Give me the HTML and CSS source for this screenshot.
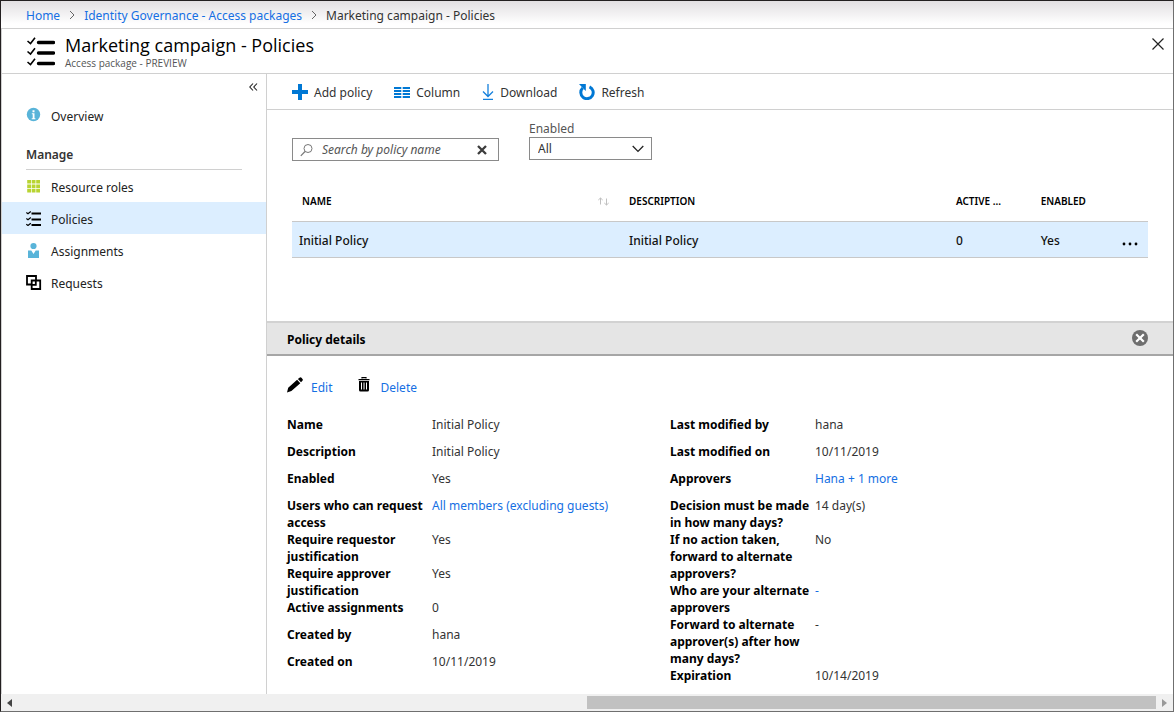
FILE: index.html
```html
<!DOCTYPE html>
<html lang="en">
<head>
<meta charset="utf-8">
<title>Marketing campaign - Policies</title>
<link rel="stylesheet" href="styles.css">
</head>
<body>
<div class="window">
  <nav class="breadcrumb" aria-label="Breadcrumb">
    <a href="#">Home</a>
    <svg class="sep" viewBox="0 0 6 10"><path d="M1 1l4 4-4 4"/></svg>
    <a href="#">Identity Governance - Access packages</a>
    <svg class="sep" viewBox="0 0 6 10"><path d="M1 1l4 4-4 4"/></svg>
    <span>Marketing campaign - Policies</span>
  </nav>

  <header class="title-bar">
    <svg class="title-icon" viewBox="0 0 28 29" aria-hidden="true">
      <g fill="none" stroke="#000">
        <path d="M.5 4l3 2.500L8 .8M.5 14.500l3 2.500L8 11.300M.5 25l3 2.500L8 21.800" stroke-width="1.600"/>
        <path d="M11.500 5.500h15M11.500 16h15M11.500 26.500h15" stroke-width="3.400" stroke-linecap="round"/>
      </g>
    </svg>
    <div class="titles">
      <h1>Marketing campaign - Policies</h1>
      <p>Access package - PREVIEW</p>
    </div>
    <button class="icon-button" aria-label="Close">
      <svg width="12" height="12" viewBox="0 0 12 12"><path d="M.5.5l11 11M11.500.5l-11 11" stroke="#222" stroke-width="1.200"/></svg>
    </button>
  </header>

  <div class="body">
    <aside class="sidebar">
      <button class="collapse" aria-label="Collapse menu">
        <svg width="9" height="8" viewBox="0 0 9 8"><path d="M4 .5L.8 4 4 7.500M8 .5L4.800 4 8 7.500" fill="none" stroke="#222" stroke-width="1.100"/></svg>
      </button>
      <a class="item" href="#">
        <svg viewBox="0 0 16 16"><circle cx="7.500" cy="7.500" r="6.700" fill="#59b4d9"/><path d="M6.500 3.200h2v2h-2zM5.800 6.200h2.700v5h.9v1H5.700v-1h1V7.200h-.9z" fill="#fff"/></svg>
        <span>Overview</span>
      </a>
      <h2>Manage</h2>
      <a class="item" href="#">
        <svg viewBox="0 0 16 16"><path d="M1.200 2h3.800v3.600H1.200zM5.700 2h3.800v3.600H5.700zM10.200 2h3.800v3.600h-3.800zM1.200 6.400h3.800V10H1.200zM5.700 6.400h3.800V10H5.700zM10.200 6.400h3.800V10h-3.800zM1.200 10.800h3.800v3.600H1.200zM5.700 10.800h3.800v3.600H5.700zM10.200 10.800h3.800v3.600h-3.800z" fill="#b8d432"/></svg>
        <span>Resource roles</span>
      </a>
      <a class="item current" href="#" aria-current="page">
        <svg viewBox="0 0 16 16"><g fill="none" stroke="#000"><path d="M.3 2.500l1.700 1.300L4.800 1.500M.3 8.500L2 9.800l2.800-2.300M.3 14.200L2 15.500l2.800-2.300" stroke-width="1.200"/><path d="M5.500 3.500h9.500M5.500 9.500h9.500M5.500 15h9.500" stroke-width="2"/></g></svg>
        <span>Policies</span>
      </a>
      <a class="item" href="#">
        <svg viewBox="0 0 16 16"><circle cx="7.500" cy="4" r="3.100" fill="#59b4d9"/><path d="M2 8.500h3.300l2.200 3.400 2.200-3.400H13V16H2z" fill="#59b4d9"/></svg>
        <span>Assignments</span>
      </a>
      <a class="item" href="#">
        <svg viewBox="0 0 16 16"><path d="M5 10.500H1V2h9v3.500M5.700 6.500h8.500v8.500H5.700zM9.800 6.500V10.800h-4" fill="none" stroke="#000" stroke-width="1.800"/></svg>
        <span>Requests</span>
      </a>
    </aside>

    <main class="content">
      <div class="toolbar">
        <button><svg viewBox="0 0 16 16"><path d="M6 0h4v6h6v4h-6v6H6v-6H0V6h6z" fill="#0078d4"/></svg><span>Add policy</span></button>
        <button><svg viewBox="0 0 16 16"><path d="M0 3h7.300v2H0zM8.700 3H16v2H8.700zM0 6h7.300v2H0zM8.700 6H16v2H8.700zM0 9h7.300v2H0zM8.700 9H16v2H8.700zM0 12h7.300v2H0zM8.700 12H16v2H8.700z" fill="#0078d4"/></svg><span>Column</span></button>
        <button><svg class="narrow" viewBox="0 0 12 16"><path d="M6 0v12M1 7.500l5 5 5-5M1 15.300h10" fill="none" stroke="#1580dc" stroke-width="1.300"/></svg><span>Download</span></button>
        <button><svg viewBox="0 0 16 16"><path d="M10.500 2.800A6.200 6.200 0 1 1 3.700 4" fill="none" stroke="#0078d4" stroke-width="3"/><path d="M0 0h6.800v7L4.700 4.900z" fill="#0078d4"/></svg><span>Refresh</span></button>
      </div>

      <form class="filters">
        <div class="search">
          <svg width="14" height="14" viewBox="0 0 14 14" aria-hidden="true"><circle cx="8" cy="5.500" r="4" fill="none" stroke="#777"/><path d="M5 8.500L.8 12.800" stroke="#777" stroke-width="1.200"/></svg>
          <input type="text" aria-label="Search by policy name" placeholder="Search by policy name">
          <button type="button" aria-label="Clear search"><svg width="10" height="10" viewBox="0 0 10 10"><path d="M1 1l8 8M9 1L1 9" stroke="#3c3c3c" stroke-width="2.300"/></svg></button>
        </div>
        <div class="field">
          <label for="enabled">Enabled</label>
          <div class="select">
            <select id="enabled"><option>All</option></select>
            <svg width="12" height="8" viewBox="0 0 12 8" aria-hidden="true"><path d="M.7 1L6 6.400 11.300 1" fill="none" stroke="#222" stroke-width="1.300"/></svg>
          </div>
        </div>
      </form>

      <table class="policies">
        <colgroup><col class="wide"><col class="wide"><col class="short"><col class="short"><col></colgroup>
        <thead>
          <tr>
            <th><span class="sortable">NAME <svg width="11" height="9" viewBox="0 0 11 9"><path d="M2.500 7.500V1M.3 3l2.200-2 2.200 2M8.500 1.500V8M6.300 6l2.200 2 2.200-2" fill="none" stroke="#c0c0c0"/></svg></span></th>
            <th>DESCRIPTION</th><th>ACTIVE ...</th><th>ENABLED</th><th></th>
          </tr>
        </thead>
        <tbody>
          <tr>
            <td>Initial Policy</td><td>Initial Policy</td><td>0</td><td>Yes</td>
            <td><button class="more" aria-label="More actions"><svg width="16" height="4" viewBox="0 0 16 4"><circle cx="2" cy="2" r="1.400"/><circle cx="8" cy="2" r="1.400"/><circle cx="14" cy="2" r="1.400"/></svg></button></td>
          </tr>
        </tbody>
      </table>

      <section class="details">
        <div class="details-head">
          <h2>Policy details</h2>
          <button aria-label="Close details"><svg width="16" height="16" viewBox="0 0 16 16"><circle cx="8" cy="8" r="8" fill="#6e6e6e"/><path d="M4.200 4.200l7.600 7.600M11.800 4.200l-7.600 7.600" stroke="#fff" stroke-width="2.200"/></svg></button>
        </div>
        <div class="actions">
          <a href="#"><svg viewBox="0 0 16 16"><path d="M0 15.500l1.200-4.700 8.900-8 3.200 3.400-8.900 7.900zM10.900 2.100l1.600-1.400q1-.9 2 .1l1 1.100q.8 1-.1 1.900L14 5.300z" fill="#000"/></svg>Edit</a>
          <a href="#"><svg class="trash" viewBox="0 0 12 16"><path d="M4 1.500V.6h4v.9M.5 2.600h11" fill="none" stroke="#000" stroke-width="1.200"/><path d="M1 4h10v9q0 1.500-1.500 1.500h-7Q1 14.500 1 13z" fill="#000"/><path d="M3.500 5.500v7M6 5.500v7M8.500 5.500v7" stroke="#fff"/></svg>Delete</a>
        </div>
        <div class="facts">
          <dl>
            <div><dt>Name</dt><dd>Initial Policy</dd></div>
            <div><dt>Description</dt><dd>Initial Policy</dd></div>
            <div><dt>Enabled</dt><dd>Yes</dd></div>
            <div><dt>Users who can request access</dt><dd><a href="#">All members (excluding guests)</a></dd></div>
            <div><dt>Require requestor justification</dt><dd>Yes</dd></div>
            <div><dt>Require approver justification</dt><dd>Yes</dd></div>
            <div><dt>Active assignments</dt><dd>0</dd></div>
            <div><dt>Created by</dt><dd>hana</dd></div>
            <div><dt>Created on</dt><dd>10/11/2019</dd></div>
          </dl>
          <dl>
            <div><dt>Last modified by</dt><dd>hana</dd></div>
            <div><dt>Last modified on</dt><dd>10/11/2019</dd></div>
            <div><dt>Approvers</dt><dd><a href="#">Hana + 1 more</a></dd></div>
            <div><dt>Decision must be made in how many days?</dt><dd>14 day(s)</dd></div>
            <div><dt>If no action taken, forward to alternate approvers?</dt><dd>No</dd></div>
            <div><dt>Who are your alternate approvers</dt><dd><a href="#">-</a></dd></div>
            <div><dt>Forward to alternate approver(s) after how many days?</dt><dd>-</dd></div>
            <div><dt>Expiration</dt><dd>10/14/2019</dd></div>
          </dl>
        </div>
      </section>
    </main>
  </div>

  <div class="scrollbar">
    <svg width="5" height="8" viewBox="0 0 5 8"><path d="M5 0v8L0 4z" fill="#444"/></svg>
    <div class="track"><div class="thumb"></div></div>
    <svg width="5" height="8" viewBox="0 0 5 8"><path d="M0 0v8l5-4z" fill="#999"/></svg>
  </div>
</div>
</body>
</html>
```
FILE: styles.css
```css
* { box-sizing: border-box; }
body {
  margin: 0;
  font: 12px/17px "Noto Sans", "Open Sans", sans-serif;
  color: #333;
  background: #fff;
}
h1, h2, p, dl, dd { margin: 0; }
a { color: #156fe3; text-decoration: none; }
svg { flex: none; }
button, input, select { font: inherit; color: inherit; }
button { border: 0; padding: 0; background: none; display: flex; align-items: center; }

.window {
  min-height: 100vh;
  display: flex;
  flex-direction: column;
  border: 1px solid #6f6f6f;
  border-top-color: #231f20;
  border-left-color: #231f20;
}

.breadcrumb {
  height: 28px;
  padding: 1px 0 0 25px;
  display: flex;
  align-items: center;
  gap: 9px;
  border-bottom: 1px solid #d0d0d0;
  background: linear-gradient(#e2dfe2, #fff 85%);
}
.sep { width: 6px; height: 10px; fill: none; stroke: #666; }

.title-bar {
  height: 45px;
  padding: 0 9px 0 25px;
  display: flex;
  border-bottom: 1px solid #d0d0d0;
  border-left: 1px solid #d0d0d0;
}
.title-icon { width: 28px; height: 29px; margin: 8px 10px 0 0; }
.titles { flex: 1; padding-top: 4px; font-family: "Open Sans", "Noto Sans", sans-serif; }
.titles h1 { font-size: 18px; line-height: 24px; font-weight: 400; color: #000; }
.titles p { font-size: 10px; line-height: 12px; color: #555; }
.icon-button { align-self: flex-start; margin-top: 9px; }

.body { flex: 1; display: flex; border-left: 1px solid #d0d0d0; }
.sidebar { width: 265px; flex: none; border-right: 1px solid #d0d0d0; }
.collapse { height: 25px; margin-left: auto; padding-right: 8px; }
.item {
  height: 32px;
  padding-left: 24px;
  display: flex;
  align-items: center;
  gap: 9px;
  color: #222;
}
.item svg { width: 16px; height: 16px; }
.item span, .toolbar span { padding-top: 2px; }
.item.current { background: #dceeff; }
.sidebar h2 {
  height: 39px;
  margin: 0 24px;
  padding-top: 15px;
  font-size: 12px;
  font-weight: 600;
  border-bottom: 1px solid #d0d0d0;
}

.content { flex: 1; min-width: 0; display: flex; flex-direction: column; }
.toolbar {
  height: 36px;
  padding-left: 25px;
  display: flex;
  gap: 22px;
  border-bottom: 1px solid #d0d0d0;
}
.toolbar button { gap: 6px; }
.toolbar svg { width: 16px; height: 16px; }
.toolbar .narrow { width: 12px; }

.filters { display: flex; align-items: flex-start; gap: 30px; padding: 11px 25px 0; }
.search {
  width: 207px;
  height: 23px;
  margin-top: 17px;
  padding: 0 11px 0 7px;
  display: flex;
  align-items: center;
  gap: 8px;
  border: 1px solid #8a8a8a;
}
.search input { flex: 1; min-width: 0; border: 0; padding: 0; background: none; outline: 0; }
.search input::placeholder { color: #555; font-style: italic; opacity: 1; }
.field { width: 123px; }
.field label { display: block; line-height: 16px; color: #555; }
.select { display: grid; align-items: center; }
.select select {
  grid-area: 1 / 1;
  width: 100%;
  height: 23px;
  padding: 0 8px;
  border: 1px solid #8a8a8a;
  border-radius: 0;
  appearance: none;
  background: none;
}
.select svg { grid-area: 1 / 1; justify-self: end; margin-right: 8px; pointer-events: none; }

.policies {
  margin: 21px 25px 63px;
  border-collapse: collapse;
}
.wide { width: 38.200%; }
.short { width: 9.900%; }
.policies th {
  height: 39px;
  padding: 0 10px;
  text-align: left;
  font-size: 10px;
  font-weight: 600;
  color: #000;
}
.sortable { display: flex; justify-content: space-between; align-items: center; }
.policies td {
  height: 36px;
  padding: 2px 10px 0;
  font-weight: 500;
  color: #111;
  background: #dceeff;
  border: solid #c8c8c8;
  border-width: 1px 0;
}
.policies td:first-child { padding-left: 7px; }
.policies th:last-child, .policies td:last-child { padding-left: 0; }
.more { margin-left: auto; padding-top: 8px; }

.details-head {
  height: 35px;
  padding: 0 25px 0 20px;
  display: flex;
  align-items: center;
  justify-content: space-between;
  background: #e5e5e5;
  border-top: 2px solid #d2d2d2;
  border-bottom: 2px solid #a6a6a6;
}
.details-head h2 { padding-top: 2px; font-size: 12px; font-weight: 700; color: #000; }
.actions { display: flex; gap: 26px; padding: 21px 20px 17px; }
.actions a { display: flex; align-items: center; gap: 8px; }
.actions svg { width: 16px; height: 16px; margin-bottom: 6px; }
.actions .trash { width: 12px; margin-right: 2px; }

.facts { display: grid; grid-template-columns: 383fr 503fr; padding-left: 20px; }
.facts dl > div { display: grid; grid-template-columns: 145px 1fr; min-height: 27px; }
.facts dt { font-weight: 700; color: #000; }

.scrollbar {
  height: 17px;
  padding: 0 6px;
  display: flex;
  align-items: center;
  gap: 6px;
  background: #f0f0f0;
}
.track { flex: 1; display: flex; justify-content: flex-end; }
.thumb { width: 50%; height: 13px; background: #c1c1c1; }
```
